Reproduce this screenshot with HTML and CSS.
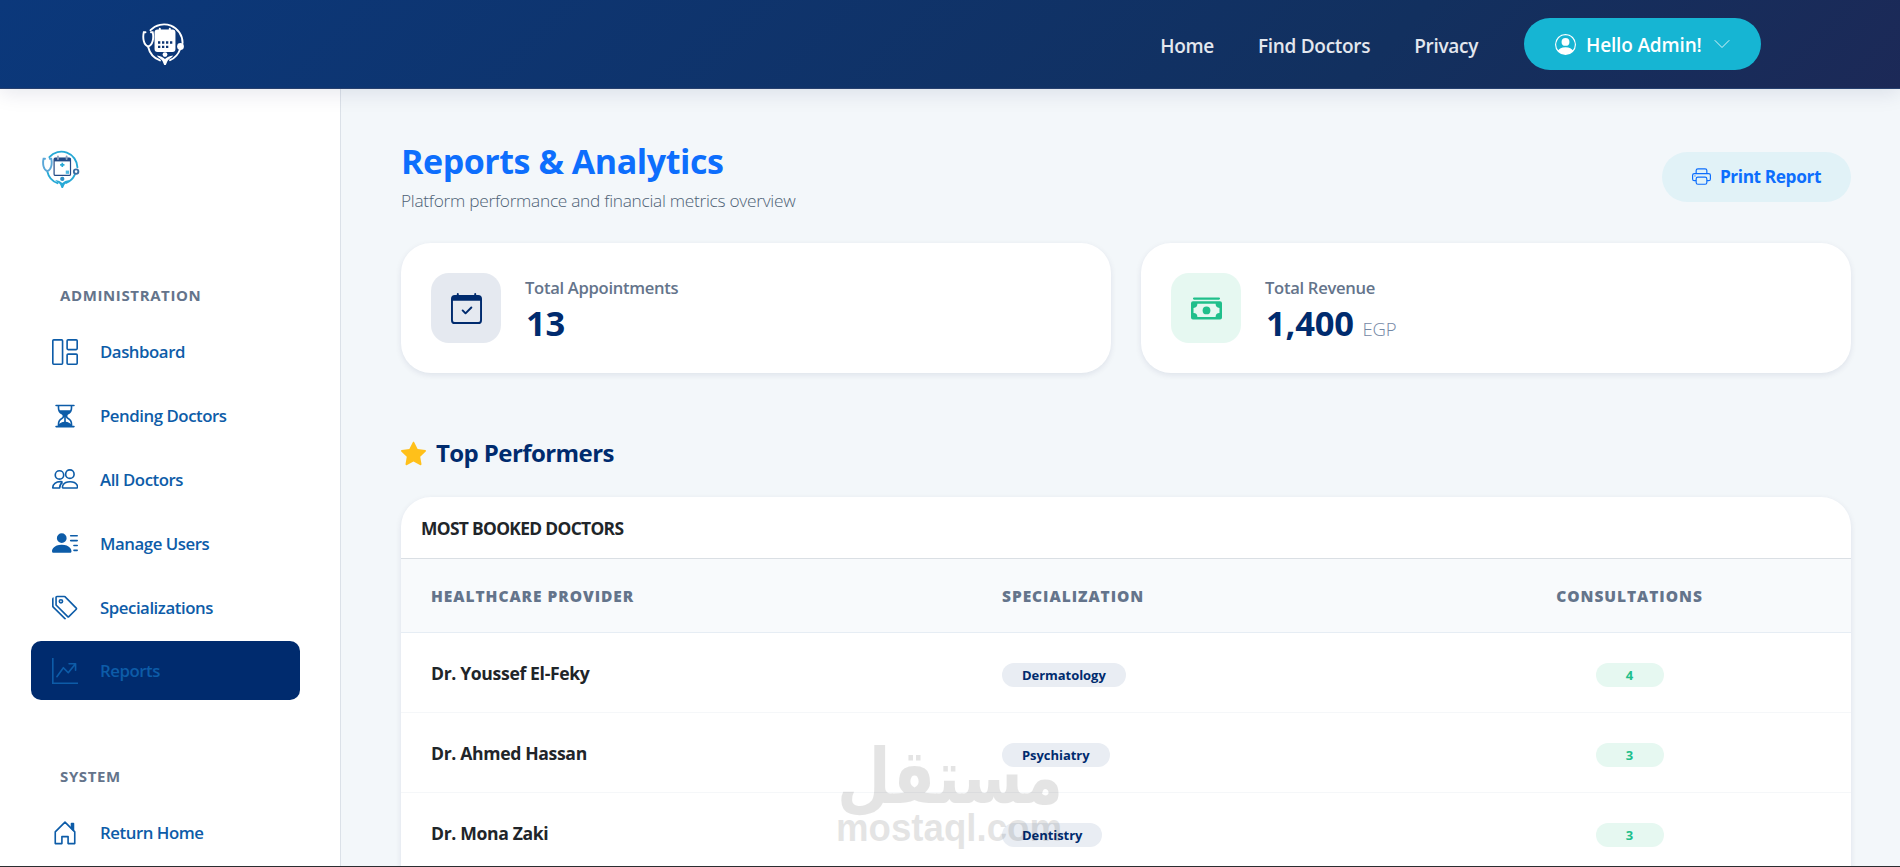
FILE: index.html
```html
<!DOCTYPE html>
<html lang="en">
<head>
  <meta charset="UTF-8">
  <title>Reports & Analytics</title>
  <meta name="viewport" content="width=device-width, initial-scale=1.0">
  <link rel="stylesheet" href="styles.css">
</head>
<body>
  <!-- Top navbar -->
  <header class="navbar">
    <a class="navbar-logo" href="#">
      <svg width="44" height="46" viewBox="0 0 44 46" fill="none" stroke="#fff" stroke-width="1.9" stroke-linecap="round">
        <path d="M8.5 9.200A18.600 18.600 0 0 1 40.600 22"/>
        <path d="M38 28.500A18.600 18.600 0 0 1 28 39.200M18 39.400A18.600 18.600 0 0 1 6.200 26"/>
        <path d="M3.500 11.200H1.800C.5 17 1.600 24 6.200 25.500 10.800 24 12 17 10.700 11.200H9"/>
        <rect x="13.500" y="9.500" width="19" height="20.500" rx="2" fill="#fff"/>
        <path d="M17.800 7.800v3M27.800 7.800v3" stroke-width="2"/>
        <path d="M16 21.500h15M16 25.800h11" stroke="#0d3572" stroke-width="2.300" stroke-linecap="butt" stroke-dasharray="2.300 1.700"/>
        <circle cx="38.500" cy="25.500" r="3.400" fill="#fff" stroke="none"/>
        <circle cx="23" cy="33.600" r="2.400" fill="#fff" stroke="none"/>
        <path d="M14.800 34.500c4 .3 6 1.800 8.200 3.500 2.200-1.700 4.200-3.200 8.200-3.500-1.200 2.500-4.500 3-5.700 5.500L23.800 44h-1.600l-1.700-4c-1.200-2.500-4.500-3-5.700-5.500z" fill="#fff" stroke="none"/>
      </svg>
    </a>
    <nav class="navbar-links">
      <a href="#">Home</a>
      <a href="#">Find Doctors</a>
      <a href="#">Privacy</a>
    </nav>
    <button class="user-btn">
      <svg width="21" height="21" viewBox="0 0 16 16" fill="currentColor"><path d="M11 6a3 3 0 1 1-6 0 3 3 0 0 1 6 0"/><path fill-rule="evenodd" d="M0 8a8 8 0 1 1 16 0A8 8 0 0 1 0 8m8-7a7 7 0 0 0-5.468 11.370C3.242 11.226 4.805 10 8 10s4.757 1.225 5.468 2.370A7 7 0 0 0 8 1"/></svg>
      <span>Hello Admin!</span>
      <svg class="chevron" width="16" height="16" viewBox="0 0 16 16" fill="none" stroke="currentColor" stroke-linecap="round" stroke-linejoin="round"><path d="M1 4.500l7 7 7-7"/></svg>
    </button>
  </header>

  <div class="layout">
    <!-- Sidebar -->
    <aside class="sidebar">
      <a class="sidebar-logo" href="#">
        <svg width="38" height="40" viewBox="0 0 44 46" fill="none" stroke="#27a9d6" stroke-width="2.200" stroke-linecap="round">
          <path d="M8.500 9.200A18.600 18.600 0 0 1 41 21"/>
          <path d="M38 29.500A18.600 18.600 0 0 1 28 39.200M18 39.400A18.600 18.600 0 0 1 6.200 26"/>
          <path d="M3.500 11.200H1.800C.5 17 1.600 24 6.200 25.500 10.800 24 12 17 10.700 11.200H9" stroke="#5aa7d8"/>
          <rect x="14" y="10.500" width="19" height="20" rx="1.500" stroke="#234a85" stroke-width="1.400"/>
          <path d="M14 12.200h19" stroke="#234a85" stroke-width="4" stroke-linecap="butt"/>
          <path d="M18.500 8.500v3M28.500 8.500v3" stroke="#8fa0bd"/>
          <path d="M23.500 15.800v5M21 18.300h5" stroke-width="1.900" stroke-linecap="butt"/>
          <rect x="27.500" y="24.800" width="3.800" height="3.800" fill="#4cb6e0" stroke="none"/>
          <circle cx="39.500" cy="26" r="2.600" stroke="#3b6ea3"/>
          <circle cx="23.500" cy="34.500" r="2.500" fill="#2e8fc4" stroke="none"/>
          <path d="M15.300 35.700c4 .3 6 1.800 8.200 3.500 2.200-1.700 4.200-3.200 8.200-3.500-1.200 2.500-4.500 3-5.700 5.500L24.300 45h-1.600l-1.700-4c-1.200-2.500-4.500-3-5.700-5.300z" fill="#27a9d6" stroke="none"/>
        </svg>
      </a>

      <h6 class="menu-label">ADMINISTRATION</h6>
      <ul class="menu">
        <li><a href="#">
          <svg viewBox="0 0 16 16" fill="none" stroke="currentColor"><rect x=".5" y=".5" width="6" height="15" rx=".6"/><rect x="9.300" y=".5" width="6.200" height="6" rx=".6"/><rect x="9.300" y="9.300" width="6.200" height="6.200" rx=".6"/></svg>
          Dashboard</a></li>
        <li><a href="#">
          <svg viewBox="0 0 16 16"><path d="M2.500 15a.5.5 0 1 1 0-1h1v-1a4.500 4.500 0 0 1 2.557-4.060c.29-.139.443-.377.443-.59v-.7c0-.213-.154-.451-.443-.59A4.500 4.500 0 0 1 3.500 3V2h-1a.5.5 0 0 1 0-1h11a.5.5 0 0 1 0 1h-1v1a4.500 4.500 0 0 1-2.557 4.060c-.29.139-.443.377-.443.59v.7c0 .213.154.451.443.59A4.500 4.500 0 0 1 12.500 13v1h1a.5.5 0 0 1 0 1zm2-13v1c0 .537.12 1.045.337 1.500h6.326c.216-.455.337-.963.337-1.500V2zm3 6.350c0 .701-.478 1.236-1.011 1.492A3.500 3.500 0 0 0 4.500 13s.866-1.299 3-1.480zm1 0v3.170c2.134.181 3 1.480 3 1.480a3.500 3.500 0 0 0-1.989-3.158C8.978 9.586 8.500 9.052 8.500 8.351z"/></svg>
          Pending Doctors</a></li>
        <li><a href="#">
          <svg viewBox="0 0 16 16" fill="none" stroke="currentColor" stroke-linejoin="round"><circle cx="11" cy="5" r="2.600"/><circle cx="4.600" cy="5.500" r="2.600"/><path d="M6.700 13.500c-.6 0-.5-3.800 4.400-3.800s5 3.800 4.300 3.800z"/><path d="M6.500 9.700C2 9.200.4 11.400.5 13.500h4.200c0-1.500.7-2.700 1.800-3.500"/></svg>
          All Doctors</a></li>
        <li><a href="#">
          <svg viewBox="0 0 16 16"><path d="M6 8a3 3 0 1 0 0-6 3 3 0 0 0 0 6m-5 6s-1 0-1-1 1-4 6-4 6 3 6 4-1 1-1 1zM11 3.500a.5.5 0 0 1 .5-.5h4a.5.5 0 0 1 0 1h-4a.5.5 0 0 1-.5-.5m.5 2.500a.5.5 0 0 0 0 1h4a.5.5 0 0 0 0-1zm2 3a.5.5 0 0 0 0 1h2a.5.5 0 0 0 0-1zm0 3a.5.5 0 0 0 0 1h2a.5.5 0 0 0 0-1z"/></svg>
          Manage Users</a></li>
        <li><a href="#">
          <svg viewBox="0 0 16 16"><path d="M3 2v4.586l7 7L14.586 9l-7-7zM2 2a1 1 0 0 1 1-1h4.586a1 1 0 0 1 .707.293l7 7a1 1 0 0 1 0 1.414l-4.586 4.586a1 1 0 0 1-1.414 0l-7-7A1 1 0 0 1 2 6.586z"/><path d="M5.500 5a.5.5 0 1 1 0-1 .5.5 0 0 1 0 1m0 1a1.500 1.500 0 1 0 0-3 1.500 1.500 0 0 0 0 3M1 7.086a1 1 0 0 0 .293.707L8.750 15.250l-.043.043a1 1 0 0 1-1.414 0l-7-7A1 1 0 0 1 0 7.586V3a1 1 0 0 1 1-1z"/></svg>
          Specializations</a></li>
        <li class="active"><a href="#">
          <svg viewBox="0 0 16 16"><path fill-rule="evenodd" d="M0 0h1v15h15v1H0zm10 3.500a.5.5 0 0 1 .5-.5h4a.5.5 0 0 1 .5.5v4a.5.5 0 0 1-1 0V4.900l-3.613 4.417a.5.5 0 0 1-.74.037L7.060 6.767l-3.656 5.027a.5.5 0 0 1-.808-.588l4-5.500a.5.5 0 0 1 .758-.06l2.609 2.610L13.445 4H10.500a.5.5 0 0 1-.5-.5"/></svg>
          Reports</a></li>
      </ul>

      <h6 class="menu-label">SYSTEM</h6>
      <ul class="menu">
        <li><a href="#">
          <svg viewBox="0 0 16 16" fill="none" stroke="currentColor" stroke-linejoin="round"><path d="M2 7.300L8 1.300l6 6v7.200H9.900v-4.300H6.100v4.300H2z"/><path d="M12 2.200h1.200v4L12 5z" fill="currentColor"/></svg>
          Return Home</a></li>
      </ul>
    </aside>

    <!-- Page content -->
    <main class="content">
      <div class="page-head">
        <div>
          <h1>Reports &amp; Analytics</h1>
          <p>Platform performance and financial metrics overview</p>
        </div>
        <button class="print-btn">
          <svg width="19" height="19" viewBox="0 0 16 16" fill="currentColor"><path d="M2.500 8a.5.5 0 1 0 0-1 .5.5 0 0 0 0 1"/><path d="M5 1a2 2 0 0 0-2 2v2H2a2 2 0 0 0-2 2v3a2 2 0 0 0 2 2h1v1a2 2 0 0 0 2 2h6a2 2 0 0 0 2-2v-1h1a2 2 0 0 0 2-2V7a2 2 0 0 0-2-2h-1V3a2 2 0 0 0-2-2zM4 3a1 1 0 0 1 1-1h6a1 1 0 0 1 1 1v2H4zm1 5a2 2 0 0 0-2 2v1H2a1 1 0 0 1-1-1V7a1 1 0 0 1 1-1h12a1 1 0 0 1 1 1v3a1 1 0 0 1-1 1h-1v-1a2 2 0 0 0-2-2zm7 2v3a1 1 0 0 1-1 1H5a1 1 0 0 1-1-1v-3a1 1 0 0 1 1-1h6a1 1 0 0 1 1 1"/></svg>
          <span>Print Report</span>
        </button>
      </div>

      <div class="stats">
        <div class="stat-card">
          <div class="stat-icon navy">
            <svg width="31" height="31" viewBox="0 0 16 16" fill="currentColor"><path d="M10.854 7.146a.5.5 0 0 1 0 .708l-3 3a.5.5 0 0 1-.708 0l-1.500-1.500a.5.5 0 1 1 .708-.708L7.500 9.793l2.646-2.647a.5.5 0 0 1 .708 0"/><path d="M3.500 0a.5.5 0 0 1 .5.5V1h8V.5a.5.5 0 0 1 1 0V1h1a2 2 0 0 1 2 2v11a2 2 0 0 1-2 2H2a2 2 0 0 1-2-2V3a2 2 0 0 1 2-2h1V.5a.5.5 0 0 1 .5-.5M1 4v10a1 1 0 0 0 1 1h12a1 1 0 0 0 1-1V4z"/></svg>
          </div>
          <div>
            <div class="stat-label">Total Appointments</div>
            <div class="stat-value">13</div>
          </div>
        </div>
        <div class="stat-card">
          <div class="stat-icon green">
            <svg width="31" height="31" viewBox="0 0 16 16" fill="currentColor"><path d="M1.600 2.300h12.800a.5.5 0 0 1 0 1.200H1.600a.5.5 0 0 1 0-1.200z"/><path fill-rule="evenodd" d="M1 4.300h14a1 1 0 0 1 1 1v7.400a1 1 0 0 1-1 1H1a1 1 0 0 1-1-1V5.300a1 1 0 0 1 1-1zM3.300 5.600a2.100 2.100 0 0 1-2 2.100v2.600a2.100 2.100 0 0 1 2 2.100h9.400a2.100 2.100 0 0 1 2-2.100V7.700a2.100 2.100 0 0 1-2-2.100z"/><circle cx="8" cy="9" r="2"/></svg>
          </div>
          <div>
            <div class="stat-label">Total Revenue</div>
            <div class="stat-value">1,400 <small>EGP</small></div>
          </div>
        </div>
      </div>

      <h2 class="section-title">
        <svg width="25" height="25" viewBox="0 0 16 16" fill="#ffc01a"><path d="M3.612 15.443c-.386.198-.824-.149-.746-.592l.83-4.730L.173 6.765c-.329-.314-.158-.888.283-.950l4.898-.696L7.538.792c.197-.39.73-.39.927 0l2.184 4.327 4.898.696c.441.062.612.636.282.950l-3.522 3.356.83 4.730c.078.443-.36.790-.746.592L8 13.187l-4.389 2.256z"/></svg>
        Top Performers
      </h2>

      <section class="panel">
        <h3 class="panel-title">MOST BOOKED DOCTORS</h3>
        <table class="doctors">
          <colgroup><col class="col-name"><col class="col-spec"><col class="col-count"></colgroup>
          <thead>
            <tr><th>HEALTHCARE PROVIDER</th><th>SPECIALIZATION</th><th class="center">CONSULTATIONS</th></tr>
          </thead>
          <tbody>
            <tr><td>Dr. Youssef El-Feky</td><td><span class="tag">Dermatology</span></td><td class="center"><span class="count">4</span></td></tr>
            <tr><td>Dr. Ahmed Hassan</td><td><span class="tag">Psychiatry</span></td><td class="center"><span class="count">3</span></td></tr>
            <tr><td>Dr. Mona Zaki</td><td><span class="tag">Dentistry</span></td><td class="center"><span class="count">3</span></td></tr>
          </tbody>
        </table>
      </section>
    </main>
  </div>

  <!-- Watermark over the table -->
  <svg class="watermark" width="230" height="120" viewBox="0 0 230 120">
    <text class="wm-ar" x="2" y="65" textLength="226" lengthAdjust="spacingAndGlyphs">مستقل</text>
    <text class="wm-en" x="1" y="103" textLength="226" lengthAdjust="spacingAndGlyphs">mostaql.com</text>
  </svg>
</body>
</html>
```
FILE: styles.css
```css
* {
  box-sizing: border-box;
  margin: 0;
  padding: 0;
}

body {
  height: 100vh;
  overflow: hidden;
  display: flex;
  flex-direction: column;
  font-family: "Open Sans", "Noto Sans", sans-serif;
  background: #f3f7fa;
  border-bottom: 1px solid #2b2d31;
}

a {
  color: inherit;
  text-decoration: none;
}

button {
  border: none;
  font-family: inherit;
  cursor: pointer;
}

svg {
  display: block;
  flex-shrink: 0;
}

/* Navbar */
.navbar {
  height: 89px;
  flex-shrink: 0;
  display: flex;
  align-items: center;
  padding: 0 139px 0 142px;
  background: linear-gradient(135deg, #0b387b 0%, #12305f 72%, #1c2957 100%);
  border-bottom: 1px solid #27406e;
  box-shadow: 0 4px 20px rgba(0, 20, 80, 0.1);
  position: relative;
  z-index: 2;
}

.navbar-links {
  display: flex;
  gap: 44px;
  margin-left: auto;
  margin-right: 46px;
  padding-top: 3px;
  color: #e3e7ee;
  font-size: 19px;
  font-weight: 600;
  letter-spacing: -0.3px;
}

.user-btn {
  width: 237px;
  height: 52px;
  display: flex;
  align-items: center;
  padding: 0 31px;
  border-radius: 26px;
  background: #16b5d3;
  color: #fff;
  font-size: 19px;
  font-weight: 600;
  letter-spacing: -0.15px;
}

.user-btn span {
  margin-left: 10px;
  padding-top: 2px;
  white-space: nowrap;
}

.user-btn .chevron {
  margin-left: auto;
  opacity: 0.85;
}

/* Sidebar */
.layout {
  flex: 1;
  min-height: 0;
  display: flex;
}

.sidebar {
  width: 341px;
  flex-shrink: 0;
  padding: 60px 40px 0 31px;
  background: #fff;
  border-right: 1px solid #dbe1e8;
  overflow: hidden;
}

.sidebar-logo {
  display: block;
  margin-left: 11px;
}

.menu-label {
  margin-top: 96px;
  padding-left: 29px;
  font-size: 15px;
  line-height: 20px;
  font-weight: 700;
  letter-spacing: 0.62px;
  color: #64748b;
}

.menu + .menu-label {
  margin-top: 66px;
}

.menu {
  list-style: none;
  margin-top: 17px;
}

.menu li {
  margin-bottom: 5px;
  border-radius: 10px;
}

.menu a {
  display: flex;
  align-items: center;
  gap: 22px;
  height: 58.8px;
  padding-top: 1px;
  padding-left: 21px;
  color: #0d5ca8;
  font-size: 16.8px;
  font-weight: 600;
  letter-spacing: -0.45px;
}

.menu svg {
  width: 26px;
  height: 26px;
}

.menu svg:not([fill]) {
  fill: currentColor;
}

.menu .active {
  background: #002b6e;
}

/* Content */
.content {
  flex: 1;
  padding: 52px 49px 0 60px;
  overflow: hidden;
}

.page-head {
  display: flex;
  justify-content: space-between;
  align-items: center;
  margin-bottom: 29px;
}

.page-head h1 {
  font-size: 34px;
  line-height: 41px;
  font-weight: 700;
  letter-spacing: -0.45px;
  color: #0d6efd;
}

.page-head p {
  margin-top: 6px;
  font-size: 17.3px;
  line-height: 26px;
  font-weight: 300;
  letter-spacing: -0.28px;
  color: #4d6175;
}

.print-btn {
  height: 50px;
  margin-bottom: 2px;
  display: flex;
  align-items: center;
  gap: 9px;
  padding: 0 30px;
  border-radius: 25px;
  background: #e1f2f7;
  color: #0d6efd;
  font-size: 17.3px;
  font-weight: 700;
  letter-spacing: -0.4px;
}

.stats {
  display: grid;
  grid-template-columns: 1fr 1fr;
  gap: 30px;
}

.stat-card {
  height: 130px;
  display: flex;
  align-items: center;
  gap: 24px;
  padding: 0 30px;
  background: #fff;
  border-radius: 30px;
  box-shadow: 0 2px 6px rgba(0, 20, 80, 0.09);
}

.stat-icon {
  width: 70px;
  height: 70px;
  display: flex;
  align-items: center;
  justify-content: center;
  border-radius: 18px;
}

.navy {
  background: #e5e9f0;
  color: #002b6e;
}

.green {
  background: #e6f8f1;
  color: #20bf8b;
}

.stat-label {
  padding-top: 2px;
  font-size: 16.6px;
  line-height: 26px;
  font-weight: 600;
  letter-spacing: -0.3px;
  color: #64748b;
}

.stat-value {
  height: 42px;
  padding-left: 1px;
  font-size: 34.5px;
  line-height: 44px;
  font-weight: 700;
  letter-spacing: -0.2px;
  color: #002b6e;
}

.stat-value small {
  font-size: 18.5px;
  line-height: 1;
  font-weight: 300;
  color: #7488a5;
}

.section-title {
  display: flex;
  align-items: center;
  gap: 10px;
  margin: 62px 0 26px;
  font-size: 24px;
  line-height: 36px;
  font-weight: 700;
  letter-spacing: -0.58px;
  color: #002b6e;
}

/* Doctors table */
.panel {
  padding-bottom: 60px;
  background: #fff;
  border-radius: 30px;
  overflow: hidden;
  box-shadow: 0 2px 6px rgba(0, 20, 80, 0.09);
}

.panel-title {
  height: 62px;
  padding-left: 20px;
  border-bottom: 1px solid #dadfe4;
  font-size: 17.4px;
  line-height: 62px;
  font-weight: 700;
  letter-spacing: -0.68px;
  color: #212529;
}

.doctors {
  width: 100%;
  table-layout: fixed;
  border-collapse: separate;
  border-spacing: 0;
}

.col-name {
  width: 571px;
}

.col-spec {
  width: 436px;
}

.doctors th {
  height: 74px;
  padding: 0 30px;
  background: #f8fafc;
  border-bottom: 1px solid #e6edf4;
  font-size: 15.5px;
  font-weight: 800;
  letter-spacing: 0.95px;
  text-align: left;
  color: #64748b;
}

.doctors td {
  height: 80px;
  padding: 0 30px;
  border-bottom: 1px solid #f5f7f9;
  font-size: 17.6px;
  font-weight: 700;
  letter-spacing: -0.35px;
  color: #212529;
}

.doctors .center {
  text-align: center;
}

.tag,
.count {
  display: inline-block;
  margin-top: 4px;
  padding: 0 20px;
  border-radius: 12px;
  font-size: 13px;
  line-height: 24px;
  font-weight: 700;
  letter-spacing: -0.05px;
  vertical-align: middle;
}

.tag {
  background: #e9edf3;
  color: #002b6e;
}

.count {
  width: 68px;
  background: #e6f8f1;
  color: #20bf8b;
}

/* Watermark */
.watermark {
  position: absolute;
  left: 835px;
  top: 738px;
  z-index: 3;
  overflow: visible;
  fill: #000;
  opacity: 0.1;
  pointer-events: none;
}

.wm-ar {
  font-family: "DejaVu Sans", sans-serif;
  font-size: 76px;
  font-weight: 700;
}

.wm-en {
  font-family: "Liberation Sans", sans-serif;
  font-size: 38px;
  font-weight: 700;
}
```
